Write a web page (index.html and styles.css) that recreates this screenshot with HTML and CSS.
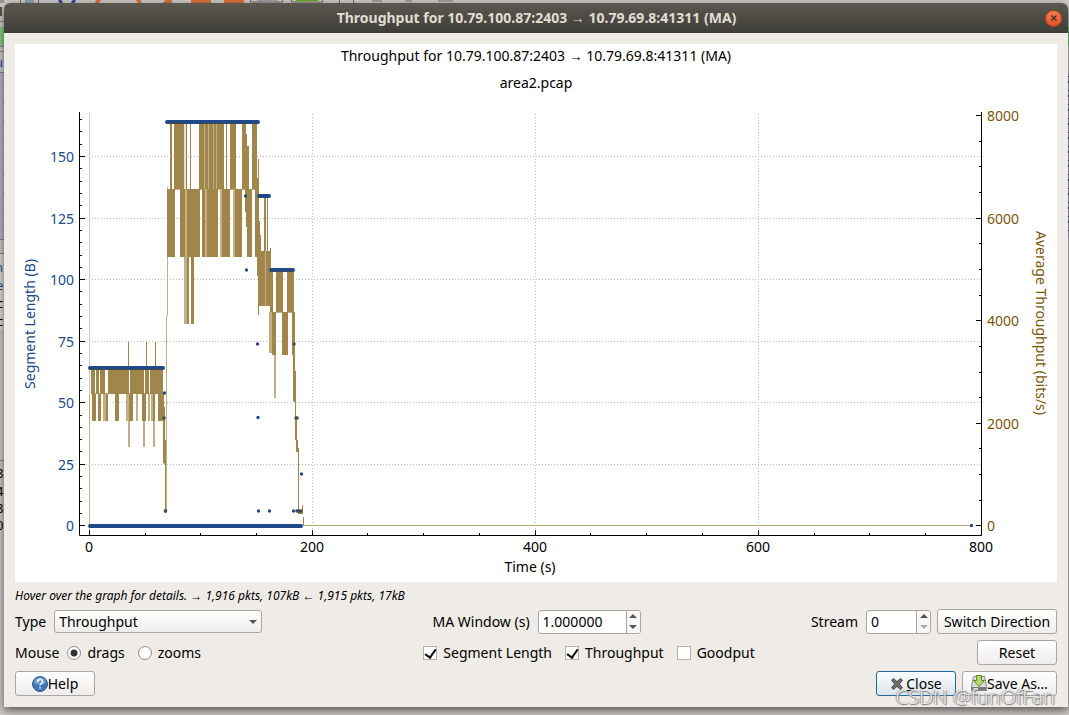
FILE: index.html
```html
<!DOCTYPE html>
<html lang="en">
<head>
<meta charset="utf-8">
<title>Throughput for 10.79.100.87:2403 → 10.79.69.8:41311 (MA)</title>
<link rel="stylesheet" href="styles.css">
</head>
<body>
<svg class="backdrop-top" width="460" height="8" aria-hidden="true">
  <path d="M0 0h4v8H0z" fill="#8e9a8a"/>
  <path d="M20.500 0v3M38.500 0v3M250.500 0v2h32V0M291.500 0v2h31V0M339.500 0v3M353.500 0v3" stroke="#666" fill="none"/>
  <path d="M25 0h9v3h-9z" fill="#8ca2b4"/>
  <path d="M59 0l3 3M75 0l-3 3" stroke="#39439a" stroke-width="3"/>
  <path d="M96 0h5l-2 3h-4zM136 0h5v3h-3zM165 0h7v3h-9zM191 0h20v3h-20zM224 0h20v3h-20z" fill="#d7713b"/>
  <path d="M257 0h20v1h-20z" fill="#a0a0a0"/><path d="M296 0h22v1h-22z" fill="#62b112"/>
  <path d="M372 1h10M405 1h7M438 1h15" stroke="#777"/>
</svg>
<svg class="backdrop-left" width="4" height="715" aria-hidden="true">
  <path d="M0 0h4v715H0z" fill="#cdcac7"/>
  <path d="M0 4h2v9H0z" fill="#55584f"/><path d="M0 24h4v19H0z" fill="#8acb89"/>
  <path d="M0 43.500h4M0 18.500h4M0 48.500h4M0 69.500h4M0 236.500h4M0 250.500h4M0 457.500h4" stroke="#8a8884"/>
  <path d="M0 70h4v166H0z" fill="#b6b4cf"/>
  <path d="M3.500 81v153" stroke="#ca8d70" stroke-dasharray="2 16"/>
  <path d="M0 251h4v76H0z" fill="#dedbd6"/><path d="M0 327h4v130H0z" fill="#ccc"/>
  <text class="sliver blue" x="-5" y="64">u</text>
  <text class="sliver blue" x="-5" y="269">n</text>
  <text class="sliver blue" x="-4" y="287">e</text>
  <text class="sliver" x="-3" y="305">c</text>
  <text class="sliver" x="-3" y="323">c</text>
  <text class="sliver" x="-4" y="475">8</text>
  <text class="sliver" x="-4" y="493">4</text>
  <text class="sliver" x="-4" y="510">8</text>
  <text class="sliver" x="-4" y="527">0</text>
</svg>
<svg class="backdrop-right" width="3" height="715" aria-hidden="true">
  <path d="M0 0h3v715H0z" fill="#cbc8c6"/><path d="M0 27h3v19H0z" fill="#70c870"/>
  <path d="M0 73h3v165H0z" fill="#aaa7bd"/><path d="M2 76v156" stroke="#303a6d" stroke-width="2" stroke-dasharray="1 4 2 7"/>
</svg>

<main class="window">
  <header class="titlebar">
    <h1>Throughput for 10.79.100.87:2403 → 10.79.69.8:41311 (MA)</h1>
    <button class="window-close" aria-label="Close window"><svg width="8" height="8"><path d="M1.500 1.500l5 5M6.500 1.500l-5 5" stroke="#3d3024" stroke-width="1.400"/></svg></button>
  </header>

  <div class="content">
    <svg class="chart" viewBox="15 44 1042 538" role="img" aria-label="Throughput graph">
      <path d="M15 44h1042v538H15z" fill="#fff"/>
      <g text-anchor="middle" class="chart-text">
        <text x="536" y="61">Throughput for 10.79.100.87:2403 → 10.79.69.8:41311 (MA)</text>
        <text x="536" y="88">area2.pcap</text>
        <text x="89" y="552">0</text><text x="312" y="552">200</text><text x="535" y="552">400</text>
        <text x="758" y="552">600</text><text x="981" y="552">800</text>
        <text x="530" y="572">Time (s)</text>
      </g>
      <g text-anchor="end" class="chart-text length-text">
        <text x="74" y="531">0</text><text x="74" y="470">25</text><text x="74" y="408">50</text><text x="74" y="347">75</text>
        <text x="74" y="285">100</text><text x="74" y="224">125</text><text x="74" y="162">150</text>
      </g>
      <text class="chart-text length-text" text-anchor="middle" transform="translate(35 324) rotate(-90)">Segment Length (B)</text>
      <g class="chart-text rate-text">
        <text x="987" y="531">0</text><text x="987" y="429">2000</text><text x="987" y="326">4000</text>
        <text x="987" y="224">6000</text><text x="987" y="121">8000</text>
      </g>
      <text class="chart-text rate-text" text-anchor="middle" transform="translate(1036 323) rotate(90)">Average Throughput (bits/s)</text>

      <path d="M80 464.500H981M80 402.500H981M80 341.500H981M80 279.500H981M80 218.500H981M80 156.500H981M312.500 114V535M535.500 114V535M758.500 114V535" stroke="#bbb" stroke-dasharray="1 2"/>
      <path d="M89.500 113V535" stroke="#c8c8c8"/>

      <!-- average throughput: pale strokes first, dense areas over them -->
      <g fill="#c2af86">
        <path d="M89 394h1v131h-1zM166 316h1v196h-1zM167 187h1v129h-1zM103 394h4v27h-4zM126 394h3v27h-3zM136 394h2v27h-2zM148 394h2v27h-2zM151 394h4v27h-4zM128 421h2v26h-2zM143 421h2v26h-2zM153 421h2v26h-2z"/>
        <path d="M91 393h73v1H91zM168 189h89v1h-89zM270 312h24v1h-24z"/>
        <path d="M184 257h3v67h-3zM185 189h2v68h-2zM220 189h3v68h-3zM233 189h3v68h-3zM269 312h3v41h-3zM274 355h2v43h-2z"/>
        <path d="M199 122h25v67h-25z"/>
      </g>
      <path d="M303 525h669v1H303z" fill="#bda877"/>
      <path d="M184 122h2v67h-2z" fill="#e8e1d3"/>
      <g fill="#a0864b">
        <path d="M91 368h4v26h-4zM96 368h3v26h-3zM100 368h5v26h-5zM108 368h21v26h-21zM130 368h14v26h-14zM145 368h4v26h-4zM150 368h13v26h-13z"/>
        <path d="M92 394h4v27h-4zM98 394h3v27h-3zM106 394h2v27h-2zM115 394h4v27h-4zM129 394h4v27h-4zM142 394h4v27h-4zM153 394h2v27h-2zM158 394h5v27h-5z"/>
        <path d="M128 342h1v26h-1zM146 342h1v26h-1zM155 342h1v26h-1zM161 394h2v27h-2zM163 394h1v69h-1zM164 407h1v57h-1zM165 440h1v59h-1zM165 499h1v14h-1z"/>
        <path d="M170 122h2v67h-2zM174 122h10v67h-10zM186 122h1v67h-1zM190 122h1v67h-1zM199 122h5v67h-5zM205 122h3v67h-3zM209 122h4v67h-4zM214 122h2v67h-2zM217 122h7v67h-7zM226 122h1v67h-1zM230 122h6v67h-6zM242 122h4v12h1v12h2v43h-7zM252 122h5v67h-5z"/>
        <path d="M167 189h8v68h-8zM180 189h5v68h-5zM187 189h13v68h-13zM202 189h3v68h-3zM207 189h11v68h-11zM222 189h8v68h-8zM235 189h7v68h-7zM245 189h7v68h-5v-30h-1v-15h-1zM255 189h4v68h-4z"/>
        <path d="M187 257h2v67h-2zM191 257h3v67h-3zM258 159h1v62h1v14h1v16h9v-2h1v30h1v27h-13v9h-1v-39h-1v-98h1zM264 196h2v55h-2zM267 196h1v55h-1z"/>
        <path d="M270 248h1v17h-1zM270 270h3v42h-3zM276 270h7v42h-7zM287 270h7v42h-7zM272 312h4v43h-4zM282 312h6v43h-6zM292 312h3v43h-3zM293 270h1v131h-1z"/>
        <path d="M294 321h1v50h1v46h1v23h1v8h1v63h3v-6h1v12h1v8h-1v-11h-5v-62h-2v-12h-1v-38h-1z"/>
      </g>
      <path d="M205 189h2v68h-2zM265 251h1v55h-1z" fill="#c2af86"/>

      <g stroke="#204a87" stroke-width="4" stroke-linecap="round">
        <path d="M90 368H163M167 122H258M259 196H269M271 270H293M90 526H301"/>
        <path d="M164.500 393h0M165.500 511h0M245.500 196h0M246.500 270h0M257.500 344h0M258 417.500h0M258.500 511h0M269.500 511h0M301.500 474h0M293.500 511h0M971.500 525.500h0" stroke-width="3.400"/>
      </g>
      <path d="M164 418h0M294 344h0M296 418h1M297 511h4M165.500 511h0" stroke="#454c4c" stroke-width="3.600" stroke-linecap="round"/>
      <path d="M91 369.500H163M168 123.500H184M199 123.500H236M242 123.500H246M252 123.500H257M270 271.500H273M276 271.500H283M287 271.500H293" stroke="#45494b"/>

      <g stroke="#000" fill="none">
        <path d="M79.500 112V535.500H981.500V112"/>
        <path d="M80 525.500h5M80 464.500h5M80 402.500h5M80 341.500h5M80 279.500h5M80 218.500h5M80 156.500h5M976 525.500h5M976 423.500h5M976 320.500h5M976 218.500h5M976 115.500h5M89.500 530v5M312.500 530v5M535.500 530v5M758.500 530v5"/>
        <path d="M80 513.500h2M80 501.500h2M80 488.500h2M80 476.500h2M80 451.500h2M80 439.500h2M80 427.500h2M80 415.500h2M80 390.500h2M80 378.500h2M80 365.500h2M80 353.500h2M80 328.500h2M80 316.500h2M80 304.500h2M80 291.500h2M80 267.500h2M80 255.500h2M80 242.500h2M80 230.500h2M80 205.500h2M80 193.500h2M80 181.500h2M80 168.500h2M80 144.500h2M80 131.500h2M80 119.500h2"/>
        <path d="M979 500.500h2M979 474.500h2M979 448.500h2M979 397.500h2M979 372.500h2M979 346.500h2M979 295.500h2M979 269.500h2M979 243.500h2M979 192.500h2M979 166.500h2M979 141.500h2M145.500 533v2M200.500 533v2M256.500 533v2M367.500 533v2M423.500 533v2M479.500 533v2M590.500 533v2M646.500 533v2M702.500 533v2M814.500 533v2M869.500 533v2M925.500 533v2"/>
      </g>
    </svg>

    <p class="hint">Hover over the graph for details. → 1,916 pkts, 107kB ← 1,915 pkts, 17kB</p>

    <div class="controls">
      <div class="row">
        <div class="group">
          <label for="type">Type</label>
          <span class="combo">
            <select id="type"><option>Throughput</option></select>
            <svg width="8" height="4" aria-hidden="true"><path d="M0 0l4 4 4-4z"/></svg>
          </span>
        </div>
        <div class="group">
          <label for="ma">MA Window (s)</label>
          <span class="spin spin-wide">
            <input id="ma" type="number" step="any" value="1.000000">
            <span class="steps">
              <button aria-label="Increase window"><svg width="8" height="4"><path d="M0 4l4-4 4 4z"/></svg></button>
              <button aria-label="Decrease window"><svg width="8" height="4"><path d="M0 0l4 4 4-4z"/></svg></button>
            </span>
          </span>
        </div>
        <div class="group buttons">
          <div class="group">
            <label for="stream">Stream</label>
            <span class="spin">
              <input id="stream" type="number" value="0" min="0">
              <span class="steps">
                <button aria-label="Next stream"><svg width="8" height="4"><path d="M0 4l4-4 4 4z"/></svg></button>
                <button aria-label="Previous stream" disabled><svg width="8" height="4"><path d="M0 0l4 4 4-4z"/></svg></button>
              </span>
            </span>
          </div>
          <button class="btn btn-direction">Switch Direction</button>
        </div>
      </div>

      <div class="row">
        <div class="group options" role="radiogroup" aria-label="Mouse">
          <span>Mouse</span>
          <label class="option"><input type="radio" name="mouse" checked>drags</label>
          <label class="option"><input type="radio" name="mouse">zooms</label>
        </div>
        <div class="group options">
          <label class="option"><input type="checkbox" checked>Segment Length</label>
          <label class="option"><input type="checkbox" checked>Throughput</label>
          <label class="option"><input type="checkbox">Goodput</label>
        </div>
        <button class="btn">Reset</button>
      </div>

      <div class="row">
        <button class="btn">
          <svg width="16" height="16" viewBox="0 0 16 16"><circle cx="8" cy="8" r="7.500" fill="#3d78b4" stroke="#2c5d92"/><path d="M2 7a6 6 0 0 1 12 0q-6 3-12 0" fill="#6f9fce"/><path d="M5.500 6q0-2.500 2.600-2.500T10.600 6C10.600 7.500 8 7.800 8 9.600M8 11v1.700" fill="none" stroke="#fff" stroke-width="1.400"/></svg>Help</button>
        <div class="group buttons">
          <button class="btn btn-default">
            <svg width="14" height="14" viewBox="0 0 14 14"><path d="M1.500 3.200l2-1.700L7 4.600l3.500-3.100 2 1.700L9.400 7l3.100 3.800-2 1.700L7 9.400l-3.500 3.100-2-1.700L4.600 7z" fill="#6a6a6a" stroke="#505050"/></svg><span><u>C</u>lose</span></button>
          <button class="btn btn-save">
            <svg width="16" height="17" viewBox="0 0 16 17"><path d="M2.500 1.500h11l2 10v4h-15v-4z" fill="#ddd" stroke="#888"/><path d="M1 12h14v3H1z" fill="#777"/><path d="M2 13.500h5" stroke="#ddd"/><path d="M5.500.500h5v5h3L8 11.500 2.500 5.500h3z" fill="#b4d96a" stroke="#5b8a1e"/></svg>Save As…</button>
        </div>
      </div>
    </div>
  </div>
</main>
<div class="watermark">CSDN @funOfFan</div>
</body>
</html>
```
FILE: styles.css
```css
* { box-sizing: border-box; }

body {
  margin: 0;
  min-height: 100vh;
  padding: 3px 1px 7px 4px;
  background: #cbc8c5;
  color: #000;
  font: 14px/20px "Noto Sans", "Open Sans", sans-serif;
  position: relative;
  overflow: hidden;
}

.backdrop-top,
.backdrop-left,
.backdrop-right { position: absolute; top: 0; }
.backdrop-top,
.backdrop-left { left: 0; }
.backdrop-left { top: 3px; }
.backdrop-right { right: 0; }
.sliver { font-size: 13px; }
.blue { fill: #1d4f93; }

.window {
  position: relative;
  background: #efebe7;
  border-radius: 6px 6px 0 0;
  box-shadow: 0 3px 8px rgba(0, 0, 0, .6);
}

.titlebar {
  display: flex;
  align-items: center;
  height: 30px;
  padding: 0 6px 0 24px;
  border-radius: 6px 6px 0 0;
  background: linear-gradient(#5b5850, #3e3d38);
  color: #e0dcd2;
}
.titlebar h1 {
  flex: 1;
  margin: 0;
  text-align: center;
  font-size: 14px;
  font-weight: 700;
}
.window-close {
  display: grid;
  place-items: center;
  width: 17px;
  height: 17px;
  padding: 0;
  border: 1px solid #b3431e;
  border-radius: 50%;
  background: linear-gradient(#f47b55, #e5501f);
}

.content {
  display: flex;
  flex-direction: column;
  gap: 5px;
  padding: 11px;
}
.chart { display: block; width: 100%; }
.chart-text { font-size: 14px; }
.length-text { fill: #204a87; }
.rate-text { fill: #7a5609; }

.hint {
  margin: 0;
  font-size: 12px;
  font-style: italic;
  line-height: 17px;
}

.controls {
  display: flex;
  flex-direction: column;
  gap: 6px;
}
.row,
.group,
.option {
  display: flex;
  align-items: center;
}
.row { justify-content: space-between; min-height: 25px; }
.group { gap: 8px; }
.buttons { gap: 6px; }
.options { gap: 13px; }
.options > span { margin-right: -5px; }
.option { gap: 6px; }

.btn {
  display: flex;
  align-items: center;
  justify-content: center;
  min-width: 80px;
  height: 25px;
  padding: 0 4px;
  border: 1px solid #a9a6a2;
  border-radius: 3px;
  background: linear-gradient(#fff, #efedeb);
  color: #000;
  font: inherit;
  white-space: nowrap;
}
.btn-direction { min-width: 120px; padding: 0; }
.btn-default { border-color: #27699b; background: linear-gradient(#fafcfd, #dbe5ea); gap: 2px; }
.btn-save { min-width: 95px; }

.combo {
  display: grid;
  align-items: center;
  width: 208px;
  height: 23px;
  border: 1px solid #a9a6a2;
  border-radius: 3px;
  background: linear-gradient(#fff, #efedeb);
}
.combo > * { grid-area: 1 / 1; }
.combo select {
  width: 100%;
  padding: 0 4px;
  border: 0;
  appearance: none;
  background: none;
  color: #000;
  font: inherit;
}
.combo svg {
  justify-self: end;
  margin-right: 4px;
  fill: #555;
  pointer-events: none;
}

.spin {
  display: flex;
  width: 65px;
  height: 24px;
  border: 1px solid #a9a6a2;
  border-radius: 3px;
  background: #fff;
  overflow: hidden;
}
.spin-wide { width: 103px; }
.spin input {
  flex: 1;
  min-width: 0;
  padding: 0 4px;
  border: 0;
  background: none;
  font: inherit;
  appearance: textfield;
}
.spin input::-webkit-inner-spin-button { appearance: none; margin: 0; }
.steps {
  display: flex;
  flex-direction: column;
  width: 14px;
  border-left: 1px solid #a9a6a2;
  background: #f8f7f6;
}
.steps button {
  display: grid;
  place-items: center;
  flex: 1;
  padding: 0;
  border: 0;
  background: none;
  fill: #555;
}
.steps button:disabled { fill: #aaa; }

.option input {
  appearance: none;
  width: 14px;
  height: 14px;
  margin: 0;
  border: 1px solid #b5b2af;
  background: #fff;
}
.option input[type="radio"] { border-radius: 50%; border-color: #8f8c89; }
.option input[type="radio"]:checked { background: radial-gradient(circle, #333 3px, #fff 4px); }
.option input[type="checkbox"] { display: grid; place-items: center; }
.option input[type="checkbox"]:checked::before {
  content: "";
  width: 5px;
  height: 9px;
  margin-bottom: 2px;
  border: solid #111;
  border-width: 0 2px 2px 0;
  rotate: 35deg;
}

.watermark {
  position: absolute;
  right: 14px;
  bottom: 5px;
  color: rgba(255, 255, 255, .7);
  font-size: 20px;
  line-height: 26px;
  font-weight: 300;
  text-shadow: 1px 1px 1px #777, -1px 0 1px #999;
  pointer-events: none;
}
```
